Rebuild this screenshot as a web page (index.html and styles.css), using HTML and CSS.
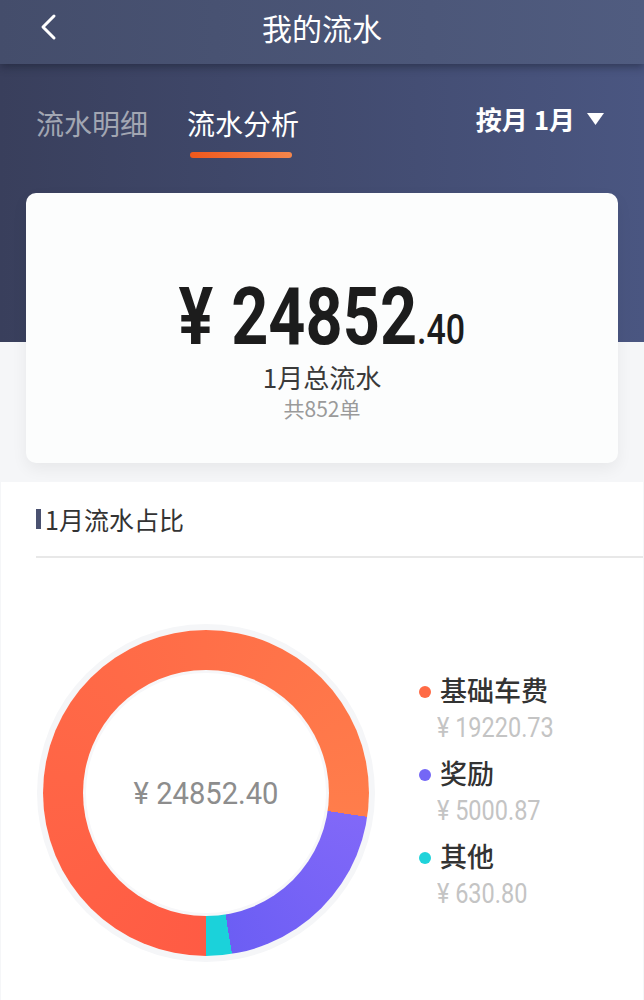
FILE: index.html
```html
<!DOCTYPE html>
<html lang="zh-CN">
<head>
    <meta charset="UTF-8">
    <meta name="viewport" content="width=device-width, initial-scale=1.0">
    <title>我的流水</title>
    <link rel="stylesheet" href="styles.css">
</head>
<body>
    <!-- Nav bar -->
    <header class="navbar">
        <a class="nav-back">
            <svg width="20" height="28" viewBox="0 0 20 28">
                <polyline points="16,3 5,14 16,25" fill="none" stroke="#fff" stroke-width="3" stroke-linecap="round" stroke-linejoin="round"/>
            </svg>
        </a>
        <h1 class="nav-title">我的流水</h1>
        <span></span>
    </header>

    <main class="page">
        <!-- Tabs -->
        <div class="tabs">
            <div class="tab">流水明细</div>
            <div class="tab active">
                流水分析
                <div class="tab-line"></div>
            </div>
            <div class="month-picker">
                按月 1月
                <svg width="17" height="12" viewBox="0 0 17 12">
                    <polygon points="0,0 17,0 8.5,12" fill="#fff"/>
                </svg>
            </div>
        </div>

        <!-- Summary card -->
        <div class="summary-card">
            <div class="summary-amount">
                <span class="num num-big"><span class="yen">¥</span>24852<span class="cents">.40</span></span>
            </div>
            <div class="summary-label">1月总流水</div>
            <div class="summary-count">共852单</div>
        </div>

        <!-- Breakdown -->
        <section class="breakdown">
            <div class="section-head">
                <span class="head-bar"></span>
                <span class="head-text">1月流水占比</span>
            </div>
            <div class="chart-row">
                <div class="donut">
                    <div class="donut-hole"><span class="num num-center">¥ 24852.40</span></div>
                </div>
                <ul class="legend">
                    <li class="legend-item">
                        <div class="legend-name"><span class="dot dot-base"></span>基础车费</div>
                        <div class="legend-amount"><span class="num num-legend">¥ 19220.73</span></div>
                    </li>
                    <li class="legend-item">
                        <div class="legend-name"><span class="dot dot-bonus"></span>奖励</div>
                        <div class="legend-amount"><span class="num num-legend">¥ 5000.87</span></div>
                    </li>
                    <li class="legend-item">
                        <div class="legend-name"><span class="dot dot-other"></span>其他</div>
                        <div class="legend-amount"><span class="num num-legend">¥ 630.80</span></div>
                    </li>
                </ul>
            </div>
        </section>
    </main>
</body>
</html>
```

FILE: styles.css
```css
:root {
    --dark: #333333;
    --muted: #9a9a9a;
    --light: #c4c4c4;
    --orange: #ff6a45;
    --purple: #7467f6;
    --cyan: #1fd3da;
}

* {
    margin: 0;
    padding: 0;
    box-sizing: border-box;
}

body {
    width: 644px;
    min-height: 1000px;
    background: #f5f6f8;
    font-family: "Noto Sans CJK SC", "Noto Sans", sans-serif;
    color: var(--dark);
}

/* DIN-like narrow digits */
.num {
    display: inline-block;
    font-family: Roboto, "Noto Sans", sans-serif;
    white-space: nowrap;
}

/* Nav bar */
.navbar {
    position: relative;
    z-index: 2;
    height: 64px;
    padding-bottom: 10px;
    display: grid;
    grid-template-columns: 90px 1fr 90px;
    align-items: center;
    background: linear-gradient(90deg, #444d6b 0%, #505c80 100%);
    box-shadow: 0 3px 8px rgba(20, 25, 40, 0.45);
}

.nav-back {
    padding-left: 38px;
    display: flex;
    align-items: center;
}

.nav-title {
    text-align: center;
    color: #fff;
    font-size: 30px;
    font-weight: 400;
    line-height: 40px;
}

/* Page */
.page {
    background:
        linear-gradient(90deg, #393f5c 0%, #4a5681 100%) top / 100% 278px no-repeat,
        #f5f6f8;
    padding-bottom: 1px;
}

.tabs {
    display: flex;
    align-items: flex-start;
    padding: 39px 40px 0 36px;
    gap: 39px;
}

.tab {
    font-size: 28px;
    line-height: 40px;
    color: #a2a6b2;
    display: flex;
    flex-direction: column;
    align-items: center;
}

.tab.active {
    color: #fff;
}

.tab-line {
    width: 102px;
    height: 6px;
    margin-top: 9px;
    margin-right: 4px;
    border-radius: 3px;
    background: linear-gradient(90deg, #ef581c 0%, #f5864c 100%);
}

.month-picker {
    margin-left: auto;
    margin-top: -4px;
    display: flex;
    align-items: center;
    gap: 12px;
    color: #fff;
    font-size: 26px;
    font-weight: 700;
    line-height: 40px;
}

/* Summary card */
.summary-card {
    margin: 35px 26px 0;
    height: 270px;
    padding-top: 84px;
    background: #fcfdfd;
    border-radius: 10px;
    box-shadow: 0 6px 16px rgba(0, 0, 0, 0.06);
    display: flex;
    flex-direction: column;
    align-items: center;
}

.summary-amount {
    height: 80px;
    line-height: 80px;
    display: flex;
    justify-content: center;
}

.num-big {
    font-size: 80px;
    line-height: 80px;
    font-weight: 700;
    color: #1c1c1c;
    transform: scaleX(0.81);
}

.num-big .yen {
    margin-right: 22px;
}

.num-big .cents {
    font-size: 42px;
    font-weight: 500;
}

.summary-label {
    height: 30px;
    margin-top: 5px;
    font-size: 26px;
    line-height: 30px;
    color: #3a3a3a;
}

.summary-count {
    height: 26px;
    margin-top: 3px;
    font-size: 21px;
    line-height: 26px;
    color: var(--muted);
}

/* Breakdown section */
.breakdown {
    margin: 19px 1px 0;
    min-height: 520px;
    background: #fff;
}

.section-head {
    margin-left: 35px;
    padding: 20px 0 20px;
    border-bottom: 2px solid #e8e8e8;
    display: flex;
    align-items: center;
}

.head-bar {
    width: 5px;
    height: 20px;
    margin-right: 4px;
    background: #4a5170;
}

.head-text {
    font-size: 25px;
    line-height: 34px;
    color: #333;
}

.chart-row {
    display: flex;
    align-items: flex-start;
    padding: 72px 0 0 42px;
}

.donut {
    width: 326px;
    height: 326px;
    border-radius: 50%;
    flex-shrink: 0;
    background: conic-gradient(from 180deg,
        #ff5b44 0%,
        #ff6a47 40%,
        #ff7d4b 77.34%,
        #8168f8 77.34%,
        #6c5ef4 97.46%,
        #1bd2da 97.46% 100%);
    box-shadow: 0 0 0 6px #f5f6f8;
    display: flex;
    align-items: center;
    justify-content: center;
}

.donut-hole {
    width: 240px;
    height: 240px;
    border-radius: 50%;
    background: #fff;
    box-shadow: 0 0 0 3px #f7f7f9;
    display: flex;
    align-items: center;
    justify-content: center;
}

.num-center {
    font-size: 31px;
    line-height: 31px;
    color: #8d8d8d;
    transform: scaleX(0.94);
}

.legend {
    list-style: none;
    margin-left: 50px;
    padding-top: 43px;
    display: flex;
    flex-direction: column;
    gap: 11px;
}

.legend-name {
    display: flex;
    align-items: center;
    font-size: 27px;
    line-height: 34px;
    font-weight: 500;
    color: #333;
}

.dot {
    width: 12px;
    height: 12px;
    margin: 3px 9px 0 0;
    border-radius: 50%;
}

.dot-base { background: var(--orange); }
.dot-bonus { background: var(--purple); }
.dot-other { background: var(--cyan); }

.legend-amount {
    height: 34px;
    margin-top: 4px;
    padding-left: 18px;
}

.num-legend {
    font-size: 27px;
    line-height: 34px;
    color: var(--light);
    transform: scaleX(0.87);
    transform-origin: left center;
}
```
